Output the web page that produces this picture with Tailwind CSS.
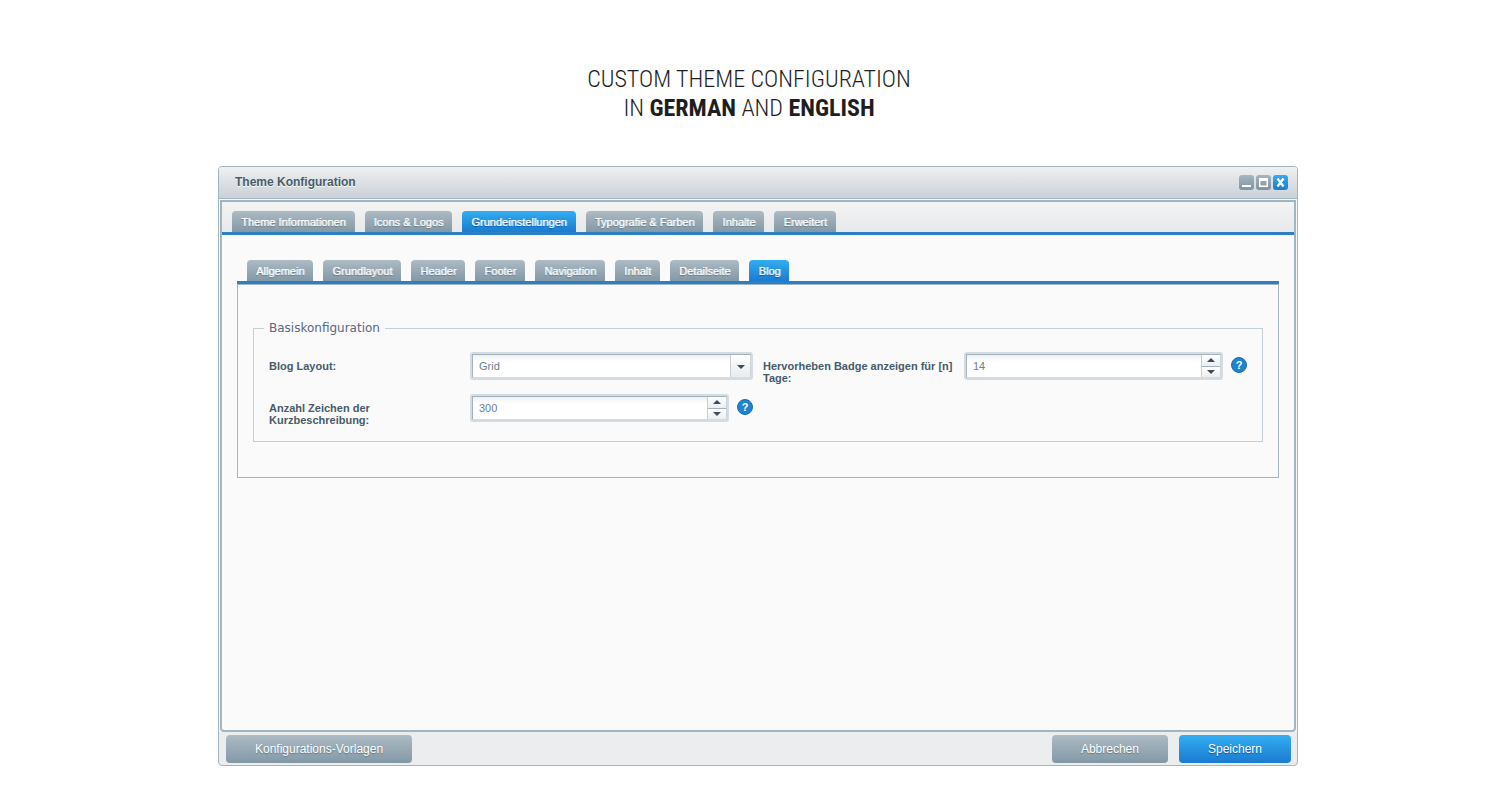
<!DOCTYPE html>
<html lang="de">
<head>
<meta charset="utf-8">
<meta name="viewport" content="width=device-width, initial-scale=1">
<title>Theme Konfiguration</title>
<script src="https://cdn.jsdelivr.net/npm/@tailwindcss/browser@4"></script>
</head>
<body class="flex min-h-screen flex-col bg-white pb-[34px] font-['Liberation_Sans',Arial,sans-serif]">
<header class="pt-[65px] pr-0.5 pb-[43px] text-center">
  <h1 lang="en" class="font-['Roboto_Condensed','Liberation_Sans_Narrow',sans-serif] text-2xl/[29px] font-light text-[#1e1e1e] uppercase">Custom theme configuration<br>in <strong class="font-bold">German</strong> and <strong class="font-bold">English</strong></h1>
</header>
<main class="flex flex-1 flex-col pl-4">
  <section aria-label="Theme Konfiguration" class="mx-auto flex w-full max-w-[1080px] flex-1 flex-col overflow-hidden rounded border border-[#a3b5c0] bg-[#ebedef]">
    <div class="flex h-8 items-center border-b border-[#a3b5c0] bg-linear-to-b from-[#f0f0f1] to-[#c9d1d7] pr-[9px] pl-4">
      <h2 class="flex-1 pb-0.5 text-xs font-bold text-[#475c6a] [text-shadow:0_1px_0_#fff]">Theme Konfiguration</h2>
      <div class="flex gap-0.5">
        <button type="button" aria-label="Minimieren" class="size-[15px] rounded-[3px] bg-linear-to-b from-[#a6b6bf] to-[#7f93a1]"><svg viewBox="0 0 15 15" class="size-[15px]"><path d="M3 10h9v2H3z" fill="#fff"/></svg></button>
        <button type="button" aria-label="Maximieren" class="size-[15px] rounded-[3px] bg-linear-to-b from-[#a6b6bf] to-[#7f93a1]"><svg viewBox="0 0 15 15" class="size-[15px]"><path d="M3 3h9v9H3zM4.500 6v4.500h6V6z" fill="#fff" fill-rule="evenodd"/></svg></button>
        <button type="button" aria-label="Schließen" class="size-[15px] rounded-[3px] bg-linear-to-b from-[#33adf2] to-[#1b7bd0]"><svg viewBox="0 0 15 15" class="size-[15px]"><path d="M4.500 3.500l6 8M10.500 3.500l-6 8" stroke="#fff" stroke-width="2.300"/></svg></button>
      </div>
    </div>
    <div class="flex flex-1 flex-col bg-[#f5f7f8] px-px pt-px">
      <div class="flex-1 rounded-b-sm border-2 border-[#a3b5c0] bg-[#fafafa]">
        <div role="tablist" aria-label="Bereiche" class="flex items-end gap-2.5 border-b-3 border-[#2b7fc5] bg-linear-to-b from-[#f4f4f4] to-[#e6e8ea] px-2.5 pt-[9px] text-[11px]/[19px] text-white">
          <button type="button" role="tab" class="rounded-t bg-linear-to-b from-[#adbbc4] to-[#8398a6] px-[9px] pt-0.5 [text-shadow:1px_0_0_#ffffffa0,0_1px_1px_#5f7482]">Theme Informationen</button>
          <button type="button" role="tab" class="rounded-t bg-linear-to-b from-[#adbbc4] to-[#8398a6] px-[9px] pt-0.5 [text-shadow:1px_0_0_#ffffffa0,0_1px_1px_#5f7482]">Icons &amp; Logos</button>
          <button type="button" role="tab" aria-selected="true" class="rounded-t bg-linear-to-b from-[#33adf2] to-[#1b7bd0] px-[9px] pt-0.5 [text-shadow:1px_0_0_#ffffffa0,0_1px_1px_#0c54a8]">Grundeinstellungen</button>
          <button type="button" role="tab" class="rounded-t bg-linear-to-b from-[#adbbc4] to-[#8398a6] px-[9px] pt-0.5 [text-shadow:1px_0_0_#ffffffa0,0_1px_1px_#5f7482]">Typografie &amp; Farben</button>
          <button type="button" role="tab" class="rounded-t bg-linear-to-b from-[#adbbc4] to-[#8398a6] px-[9px] pt-0.5 [text-shadow:1px_0_0_#ffffffa0,0_1px_1px_#5f7482]">Inhalte</button>
          <button type="button" role="tab" class="rounded-t bg-linear-to-b from-[#adbbc4] to-[#8398a6] px-[9px] pt-0.5 [text-shadow:1px_0_0_#ffffffa0,0_1px_1px_#5f7482]">Erweitert</button>
        </div>
        <div class="px-[15px] pt-[25px] pb-4">
          <div role="tablist" aria-label="Grundeinstellungen" class="flex items-end gap-2.5 border-b-3 border-[#2b7fc5] px-2.5 text-[11px]/[19px] text-white">
            <button type="button" role="tab" class="rounded-t bg-linear-to-b from-[#adbbc4] to-[#8398a6] px-[9px] pt-0.5 [text-shadow:1px_0_0_#ffffffa0,0_1px_1px_#5f7482]">Allgemein</button>
            <button type="button" role="tab" class="rounded-t bg-linear-to-b from-[#adbbc4] to-[#8398a6] px-[9px] pt-0.5 [text-shadow:1px_0_0_#ffffffa0,0_1px_1px_#5f7482]">Grundlayout</button>
            <button type="button" role="tab" class="rounded-t bg-linear-to-b from-[#adbbc4] to-[#8398a6] px-[9px] pt-0.5 [text-shadow:1px_0_0_#ffffffa0,0_1px_1px_#5f7482]">Header</button>
            <button type="button" role="tab" class="rounded-t bg-linear-to-b from-[#adbbc4] to-[#8398a6] px-[9px] pt-0.5 [text-shadow:1px_0_0_#ffffffa0,0_1px_1px_#5f7482]">Footer</button>
            <button type="button" role="tab" class="rounded-t bg-linear-to-b from-[#adbbc4] to-[#8398a6] px-[9px] pt-0.5 [text-shadow:1px_0_0_#ffffffa0,0_1px_1px_#5f7482]">Navigation</button>
            <button type="button" role="tab" class="rounded-t bg-linear-to-b from-[#adbbc4] to-[#8398a6] px-[9px] pt-0.5 [text-shadow:1px_0_0_#ffffffa0,0_1px_1px_#5f7482]">Inhalt</button>
            <button type="button" role="tab" class="rounded-t bg-linear-to-b from-[#adbbc4] to-[#8398a6] px-[9px] pt-0.5 [text-shadow:1px_0_0_#ffffffa0,0_1px_1px_#5f7482]">Detailseite</button>
            <button type="button" role="tab" aria-selected="true" class="rounded-t bg-linear-to-b from-[#33adf2] to-[#1b7bd0] px-[9px] pt-0.5 [text-shadow:1px_0_0_#ffffffa0,0_1px_1px_#0c54a8]">Blog</button>
          </div>
          <form role="tabpanel" class="border border-[#a3b5c0] px-[15px] py-[35px]">
            <fieldset class="border border-[#c5cfd6] px-2.5 pb-[15px]">
              <legend class="px-[5px] font-['DejaVu_Sans',sans-serif] text-xs/4 text-[#5c6780]">Basiskonfiguration</legend>
              <div class="grid grid-cols-2 gap-2.5 px-[5px] pt-4 text-[11px]/3">
                <div class="flex min-h-8 items-start">
                  <label for="layout" class="w-[201px] shrink-0 pt-2 pr-2 font-bold text-[#475c6a]">Blog Layout:</label>
                  <div class="relative min-w-0 flex-1 rounded-[3px] border-2 border-[#d5dce1]">
                    <select id="layout" class="block h-6 w-full appearance-none border border-[#a3b2bd] border-r-[#ccd5db] border-b-[#d5dce1] bg-white bg-linear-to-b from-[#eef1f3] to-white to-30% pr-6 pl-1.5 text-[#6b7f92]"><option>Grid</option></select>
                    <span class="pointer-events-none absolute inset-y-px right-px flex w-5 items-center justify-center border-l border-[#c5cfd6] bg-linear-to-b from-white to-[#e9ebed] pt-0.5"><svg viewBox="0 0 8 4" class="h-1 w-2"><path d="M0 0h8L4 4z" fill="#3d4b57"/></svg></span>
                  </div>
                </div>
                <div class="flex min-h-8 items-start">
                  <label for="badge" class="w-[201px] shrink-0 pt-2 pr-2 font-bold text-[#475c6a]">Hervorheben Badge anzeigen für [n] Tage:</label>
                  <div class="min-w-0 flex-1 rounded-[3px] border-2 border-[#d5dce1]">
                    <div class="flex h-6 border border-[#a3b2bd] border-r-[#ccd5db] border-b-[#d5dce1] bg-white bg-linear-to-b from-[#eef1f3] to-white to-30%">
                      <input id="badge" type="text" inputmode="numeric" value="14" class="min-w-0 flex-1 bg-transparent px-1.5 text-[#6b7f92]">
                      <div class="flex w-[19px] flex-col divide-y divide-[#a3b2bd] border-l border-[#c5cfd6]">
                        <button type="button" aria-label="Badge-Tage erhöhen" class="flex flex-1 items-center justify-center bg-linear-to-b from-white to-[#eceef0]"><svg viewBox="0 0 8 4" class="h-1 w-2"><path d="M0 4h8L4 0z" fill="#3d4b57"/></svg></button>
                        <button type="button" aria-label="Badge-Tage verringern" class="flex flex-1 items-center justify-center bg-linear-to-b from-white to-[#eceef0]"><svg viewBox="0 0 8 4" class="h-1 w-2"><path d="M0 0h8L4 4z" fill="#3d4b57"/></svg></button>
                      </div>
                    </div>
                  </div>
                  <button type="button" aria-label="Hilfe zum Badge" class="mt-[5px] ml-2 size-4 rounded-full border border-[#1a6fb4] bg-[#2083cd] text-center text-[11px]/[14px] font-bold text-white">?</button>
                </div>
                <div class="flex min-h-8 items-start">
                  <label for="zeichen" class="w-[201px] shrink-0 pt-2 pr-2 font-bold text-[#475c6a]">Anzahl Zeichen der Kurzbeschreibung:</label>
                  <div class="min-w-0 flex-1 rounded-[3px] border-2 border-[#d5dce1]">
                    <div class="flex h-6 border border-[#a3b2bd] border-r-[#ccd5db] border-b-[#d5dce1] bg-white bg-linear-to-b from-[#eef1f3] to-white to-30%">
                      <input id="zeichen" type="text" inputmode="numeric" value="300" class="min-w-0 flex-1 bg-transparent px-1.5 text-[#6b7f92]">
                      <div class="flex w-[19px] flex-col divide-y divide-[#a3b2bd] border-l border-[#c5cfd6]">
                        <button type="button" aria-label="Zeichenzahl erhöhen" class="flex flex-1 items-center justify-center bg-linear-to-b from-white to-[#eceef0]"><svg viewBox="0 0 8 4" class="h-1 w-2"><path d="M0 4h8L4 0z" fill="#3d4b57"/></svg></button>
                        <button type="button" aria-label="Zeichenzahl verringern" class="flex flex-1 items-center justify-center bg-linear-to-b from-white to-[#eceef0]"><svg viewBox="0 0 8 4" class="h-1 w-2"><path d="M0 0h8L4 4z" fill="#3d4b57"/></svg></button>
                      </div>
                    </div>
                  </div>
                  <button type="button" aria-label="Hilfe zur Zeichenzahl" class="mt-[5px] ml-2 size-4 rounded-full border border-[#1a6fb4] bg-[#2083cd] text-center text-[11px]/[14px] font-bold text-white">?</button>
                </div>
              </div>
            </fieldset>
          </form>
        </div>
      </div>
    </div>
    <footer class="flex items-center gap-[11px] pt-[3px] pr-1.5 pb-0.5 pl-[7px] text-xs/7 text-white">
      <button type="button" class="mr-auto rounded bg-linear-to-b from-[#adbbc4] to-[#8398a6] px-[29px] [text-shadow:0_1px_1px_#5f7482]">Konfigurations-Vorlagen</button>
      <button type="button" class="rounded bg-linear-to-b from-[#adbbc4] to-[#8398a6] px-[29px] [text-shadow:0_1px_1px_#5f7482]">Abbrechen</button>
      <button type="button" class="rounded bg-linear-to-b from-[#33adf2] to-[#1b7bd0] px-[29px] [text-shadow:0_1px_1px_#0c54a8]">Speichern</button>
    </footer>
  </section>
</main>
</body>
</html>
